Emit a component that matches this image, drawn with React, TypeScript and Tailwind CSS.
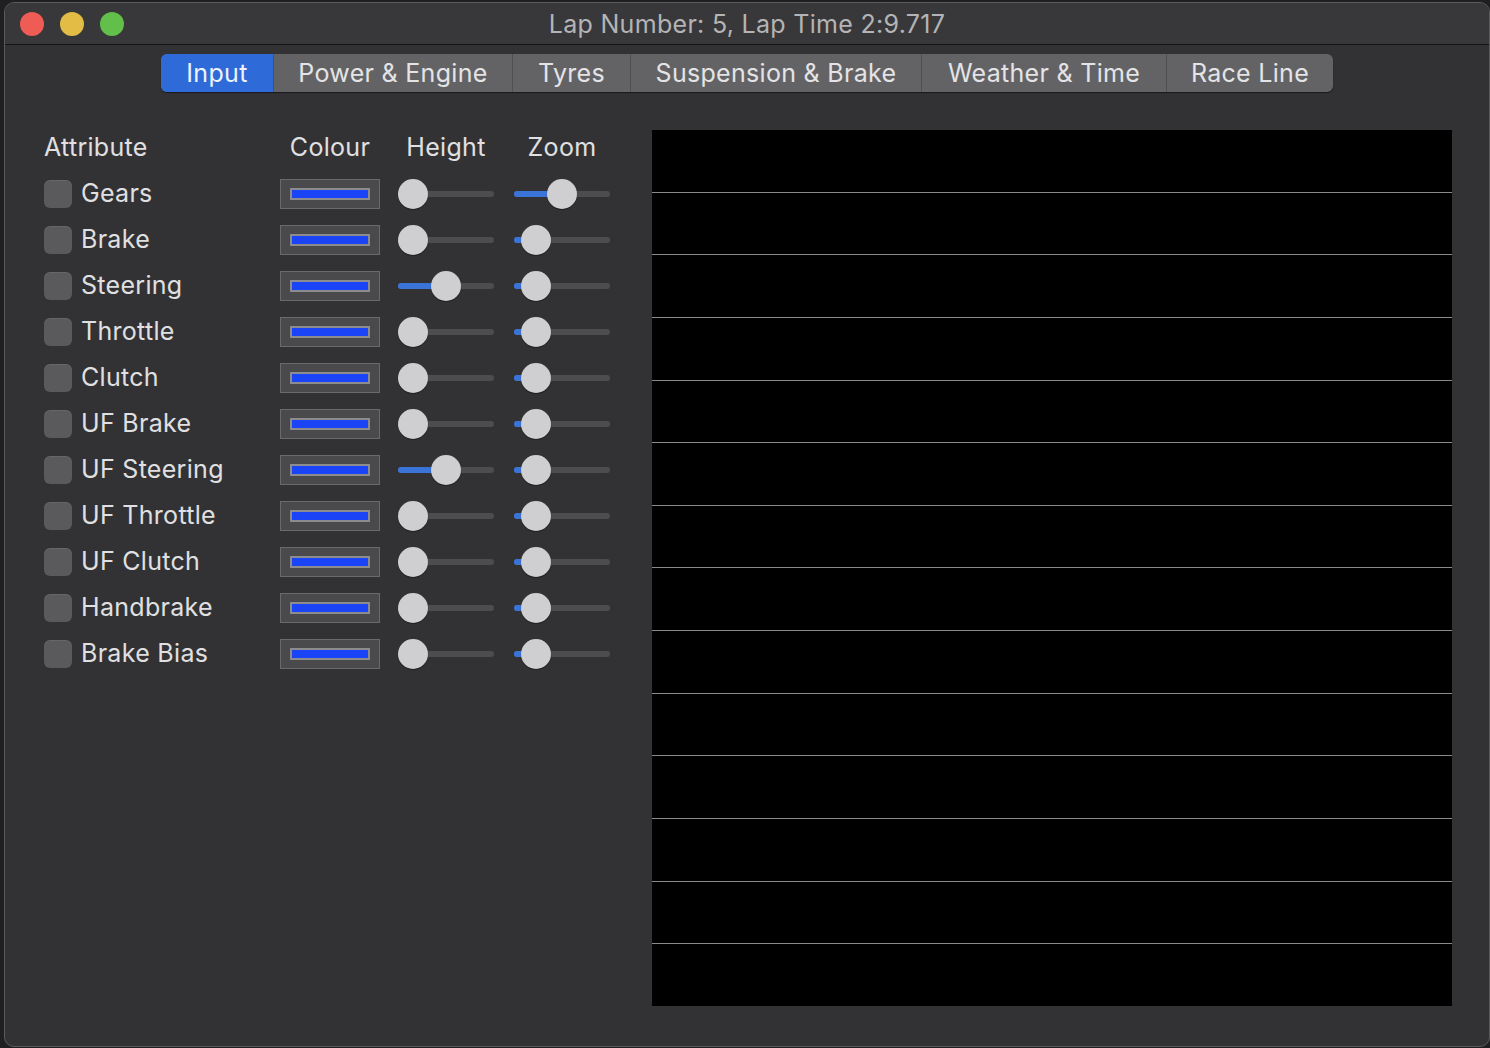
import React from "react";

const tabs = [
  { label: "Input", w: "w-[112px]" },
  { label: "Power & Engine", w: "w-[239px]" },
  { label: "Tyres", w: "w-[118px]" },
  { label: "Suspension & Brake", w: "w-[291px]" },
  { label: "Weather & Time", w: "w-[245px]" },
  { label: "Race Line", w: "w-[167px]" },
];

const attributes = [
  { name: "Gears", height: 0, zoom: 0.5 },
  { name: "Brake", height: 0, zoom: 0.1 },
  { name: "Steering", height: 0.5, zoom: 0.1 },
  { name: "Throttle", height: 0, zoom: 0.1 },
  { name: "Clutch", height: 0, zoom: 0.1 },
  { name: "UF Brake", height: 0, zoom: 0.1 },
  { name: "UF Steering", height: 0.5, zoom: 0.1 },
  { name: "UF Throttle", height: 0, zoom: 0.1 },
  { name: "UF Clutch", height: 0, zoom: 0.1 },
  { name: "Handbrake", height: 0, zoom: 0.1 },
  { name: "Brake Bias", height: 0, zoom: 0.1 },
];

function Slider({ value }: { value: number }) {
  // thumb is 30px on a 96px track
  const center = 15 + value * 66;
  return (
    <div className="relative flex h-[30px] w-[96px] items-center">
      <div className="h-[6px] w-full rounded-full bg-[#4d4d4f]" />
      <div
        className="absolute left-0 h-[6px] rounded-full bg-[#3b74d9]"
        style={{ width: center }}
      />
      <div
        className="absolute top-0 h-[30px] w-[30px] rounded-full bg-[#cfcfd1] shadow-[0_1px_1px_rgba(0,0,0,0.4)]"
        style={{ left: center - 15 }}
      />
    </div>
  );
}

function Swatch() {
  return (
    <div className="flex h-[30px] w-[100px] items-center justify-center border border-[#6a6a6c] bg-[#4a4a4c]">
      <div className="h-[12px] w-[80px] border-2 border-[#8c8c8e] bg-[#1a44f5]" />
    </div>
  );
}

export default function App() {
  return (
    <div
      className="h-[1048px] w-full overflow-hidden bg-[#1f1f21] pl-[4px] pt-[2px] tracking-[0.3px]"
      style={{ fontFamily: 'Inter, "Liberation Sans", sans-serif' }}
    >
      <div className="flex h-[1045px] w-[1486px] flex-col overflow-hidden rounded-[10px] border border-[#5a5a5c] bg-[#323234]">
        <div className="relative flex h-[42px] shrink-0 items-center justify-center border-b border-[#141414] bg-[#38383a]">
          <div className="absolute left-[15px] top-[9px] flex gap-[16px]">
            <div className="h-[24px] w-[24px] rounded-full bg-[#ee5c55]" />
            <div className="h-[24px] w-[24px] rounded-full bg-[#e3bc45]" />
            <div className="h-[24px] w-[24px] rounded-full bg-[#62c04a]" />
          </div>
          <span className="mt-[3px] text-[25px] text-[#b4b4b6]">
            Lap Number: 5, Lap Time 2:9.717
          </span>
        </div>

        <div className="flex justify-center pt-[9px]">
          <div className="flex h-[38px] overflow-hidden rounded-[6px] bg-[#636365] shadow-[0_1px_1px_rgba(0,0,0,0.5)]">
            {tabs.map((t, i) => (
              <div
                key={t.label}
                className={
                  i === 0
                    ? `flex items-center justify-center bg-[#2e6bd9] pt-[2px] text-[25px] text-[#eef2fb] ${t.w}`
                    : `flex items-center justify-center border-l border-[#505052] pt-[2px] text-[25px] text-[#e4e4e6] ${t.w}`
                }
              >
                {t.label}
              </div>
            ))}
          </div>
        </div>

        <div className="flex flex-1 pt-[38px] pl-[39px]">
          <div className="w-[608px] shrink-0">
            <div className="-mt-[5px] grid grid-cols-[218px_100px_96px_98px] gap-x-[18px] text-[25px] text-[#e0e0e2]">
              <div className="flex h-[46px] items-center">Attribute</div>
              <div className="flex h-[46px] items-center justify-center">Colour</div>
              <div className="flex h-[46px] items-center justify-center">Height</div>
              <div className="flex h-[46px] items-center justify-center pl-[2px]">Zoom</div>
              {attributes.map((a) => (
                <React.Fragment key={a.name}>
                  <div className="flex h-[46px] items-center gap-[9px]">
                    <div className="h-[28px] w-[28px] rounded-[6px] bg-[#5a5a5c] shadow-[inset_0_1px_0_rgba(255,255,255,0.08)]" />
                    <span>{a.name}</span>
                  </div>
                  <div className="flex h-[46px] items-center">
                    <Swatch />
                  </div>
                  <div className="flex h-[46px] items-center">
                    <Slider value={a.height} />
                  </div>
                  <div className="flex h-[46px] items-center pl-[2px]">
                    <Slider value={a.zoom} />
                  </div>
                </React.Fragment>
              ))}
            </div>
          </div>

          <div className="flex h-[876px] w-[800px] flex-col bg-black">
            {Array.from({ length: 14 }).map((_, i) => (
              <div
                key={i}
                className={
                  i === 13
                    ? "flex-1"
                    : "flex-1 border-b border-[#8a8a8a]"
                }
              />
            ))}
          </div>
        </div>
      </div>
    </div>
  );
}
